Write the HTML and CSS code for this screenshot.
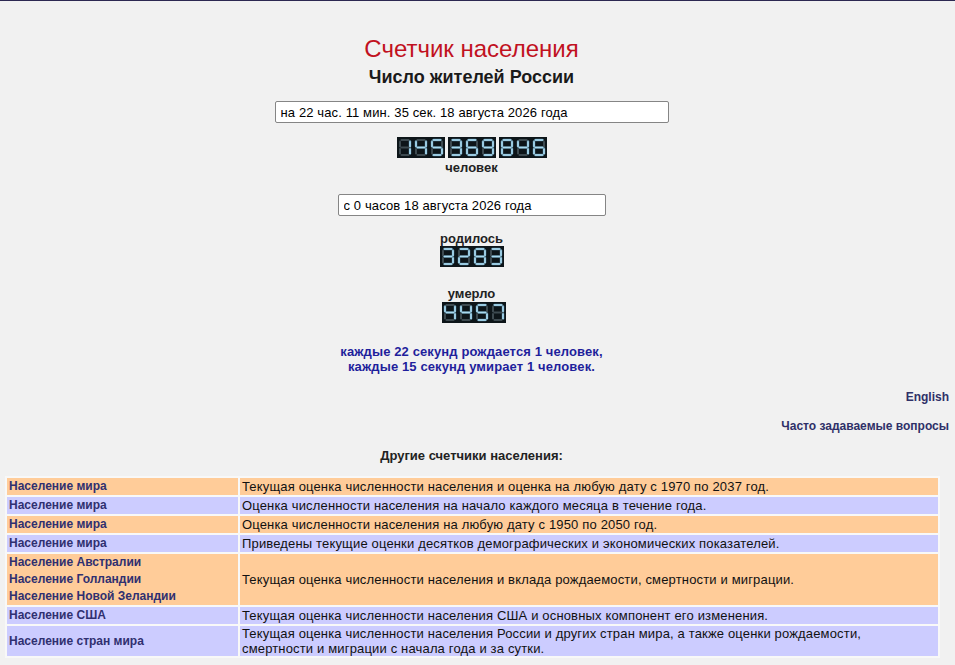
FILE: index.html
```html
<!DOCTYPE html>
<html>

<head>
    <title>Счетчик населения России</title>
    <meta charset="utf-8">
    <link rel="stylesheet" href="styles.css">
</head>

<body>
    <div class="counter">
        <h1 class="title">Счетчик населения</h1>
        <h2 class="subtitle">Число жителей России</h2>

        <input type="text" class="date-field date-field-wide" value="на 22 час. 11 мин. 35 сек. 18 августа 2026 года" readonly>
        <div class="lcd lcd-main" data-value="145369846" data-group="3"></div>
        <div class="caption caption-after">человек</div>

        <input type="text" class="date-field date-field-short" value="с 0 часов 18 августа 2026 года" readonly>
        <div class="caption caption-births">родилось</div>
        <div class="lcd" data-value="3283"></div>
        <div class="caption caption-deaths">умерло</div>
        <div class="lcd lcd-deaths" data-value="4457"></div>

        <p class="rate">каждые 22 секунд рождается 1 человек,<br>каждые 15 секунд умирает 1 человек.</p>
    </div>

    <div class="links">
        <a href="#" class="link-english">English</a>
        <a href="#" class="link-faq">Часто задаваемые вопросы</a>
    </div>

    <div class="section-title">Другие счетчики населения:</div>

    <table class="others">
        <tr class="row-orange">
            <td class="country"><a href="#">Население мира</a></td>
            <td class="about">Текущая оценка численности населения и оценка на любую дату с 1970 по 2037 год.</td>
        </tr>
        <tr class="row-blue">
            <td class="country"><a href="#">Население мира</a></td>
            <td class="about">Оценка численности населения на начало каждого месяца в течение года.</td>
        </tr>
        <tr class="row-orange">
            <td class="country"><a href="#">Население мира</a></td>
            <td class="about">Оценка численности населения на любую дату с 1950 по 2050 год.</td>
        </tr>
        <tr class="row-blue">
            <td class="country"><a href="#">Население мира</a></td>
            <td class="about">Приведены текущие оценки десятков демографических и экономических показателей.</td>
        </tr>
        <tr class="row-orange">
            <td class="country">
                <a href="#">Население Австралии</a><br>
                <a href="#">Население Голландии</a><br>
                <a href="#">Население Новой Зеландии</a>
            </td>
            <td class="about">Текущая оценка численности населения и вклада рождаемости, смертности и миграции.</td>
        </tr>
        <tr class="row-blue">
            <td class="country"><a href="#">Население США</a></td>
            <td class="about">Текущая оценка численности населения США и основных компонент его изменения.</td>
        </tr>
        <tr class="row-blue">
            <td class="country"><a href="#">Население стран мира</a></td>
            <td class="about">Текущая оценка численности населения России и других стран мира, а также оценки рождаемости,<br>смертности и миграции с начала года и за сутки.</td>
        </tr>
    </table>

    <script src="script.js"></script>
</body>

</html>
```

FILE: styles.css
```css
body {
    margin: 0;
    padding: 0;
    border-top: 1px solid #2c2852;
    background-color: #f1f1f1;
    font-family: "Liberation Sans", Arial, sans-serif;
    color: #222;
}

a {
    text-decoration: none;
}

.counter {
    width: 943px;
    display: flex;
    flex-direction: column;
    align-items: center;
}

.title {
    margin: 34px 0 0;
    font-size: 24px;
    line-height: 28px;
    font-weight: normal;
    color: #c1121f;
}

.subtitle {
    margin: 4px 0 0;
    font-size: 18px;
    line-height: 20px;
    font-weight: bold;
    color: #1a1a1a;
}

.date-field {
    box-sizing: border-box;
    height: 22px;
    padding: 0 5px;
    border: 1px solid #858585;
    border-radius: 2px;
    background-color: #fff;
    font-family: "Liberation Sans", Arial, sans-serif;
    font-size: 13px;
    letter-spacing: 0.12px;
    color: #000;
}

.date-field-wide {
    width: 394px;
    margin-top: 14px;
}

.date-field-short {
    width: 268px;
    margin-top: 19px;
}

.caption {
    font-size: 13px;
    line-height: 15px;
    font-weight: bold;
    color: #222;
}

.caption-after {
    margin-top: 2px;
}

.caption-births {
    margin-top: 15px;
}

.caption-deaths {
    margin-top: 19px;
}

/* seven-segment displays, digits are drawn by script.js */
.lcd {
    display: flex;
    gap: 3px;
    height: 21px;
}

.lcd-main {
    margin-top: 14px;
}

.lcd-deaths {
    margin-top: 1px;
    margin-left: 5px;
}

.lcd-group {
    display: flex;
    background-color: #0d1519;
}

.lcd-digit {
    display: block;
    width: 16px;
    height: 21px;
}

.lcd-digit .off {
    fill: #3d4a50;
}

.lcd-digit .on {
    fill: #a9d9ef;
    stroke: #5f95ad;
    stroke-width: 0.4;
}

.rate {
    margin: 21px 0 0;
    font-size: 13px;
    line-height: 15px;
    font-weight: bold;
    letter-spacing: 0.12px;
    text-align: center;
    color: #1f1f9c;
}

.links {
    width: 949px;
    margin-top: 16px;
    display: flex;
    flex-direction: column;
    align-items: flex-end;
    gap: 15px;
}

.links a {
    font-size: 12px;
    line-height: 14px;
    font-weight: bold;
    color: #2f3068;
}

.section-title {
    width: 943px;
    margin-top: 15px;
    font-size: 13px;
    line-height: 15px;
    font-weight: bold;
    text-align: center;
    color: #222;
}

.others {
    width: 935px;
    margin: 13px 0 0 5px;
    border-collapse: separate;
    border-spacing: 2px;
    background-color: #f8f8f8;
}

.others td {
    padding: 0 2px;
    vertical-align: middle;
}

.country {
    width: 227px;
    font-size: 12px;
    line-height: 17px;
    font-weight: bold;
}

.country a {
    color: #303070;
}

.about {
    padding: 1px 2px;
    font-size: 13px;
    line-height: 15px;
    letter-spacing: 0.16px;
    color: #111;
}

.row-orange td {
    background-color: #ffcc99;
}

.row-blue td {
    background-color: #ccccff;
}
```

FILE: script.js
```js
// seven-segment digit drawing for the counters
var SEGMENTS = {
    a: '4.2,2 11.8,2 12.8,3 11.8,4 4.2,4 3.2,3',
    b: '12,4.2 13,3.2 14,4.2 14,9.6 13,10.5 12,9.6',
    c: '12,11.4 13,10.5 14,11.4 14,16.8 13,17.8 12,16.8',
    d: '4.2,17 11.8,17 12.8,18 11.8,19 4.2,19 3.2,18',
    e: '2,11.4 3,10.5 4,11.4 4,16.8 3,17.8 2,16.8',
    f: '2,4.2 3,3.2 4,4.2 4,9.6 3,10.5 2,9.6',
    g: '4.2,9.5 11.8,9.5 12.8,10.5 11.8,11.5 4.2,11.5 3.2,10.5'
};

var DIGITS = ['abcdef', 'bc', 'abdeg', 'abcdg', 'bcfg', 'acdfg', 'acdefg', 'abc', 'abcdefg', 'abcdfg'];

function drawDigit(n) {
    var lit = DIGITS[n];
    var svg = '<svg class="lcd-digit" viewBox="0 0 16 21">';
    for (var s in SEGMENTS) {
        var cls = lit.indexOf(s) >= 0 ? 'on' : 'off';
        svg += '<polygon class="' + cls + '" points="' + SEGMENTS[s] + '"/>';
    }
    return svg + '</svg>';
}

document.querySelectorAll('.lcd').forEach(function (el) {
    var value = el.dataset.value;
    var size = parseInt(el.dataset.group, 10) || value.length;
    var html = '';
    for (var i = 0; i < value.length; i += size) {
        html += '<span class="lcd-group">';
        value.substr(i, size).split('').forEach(function (ch) {
            html += drawDigit(+ch);
        });
        html += '</span>';
    }
    el.innerHTML = html;
});
```
